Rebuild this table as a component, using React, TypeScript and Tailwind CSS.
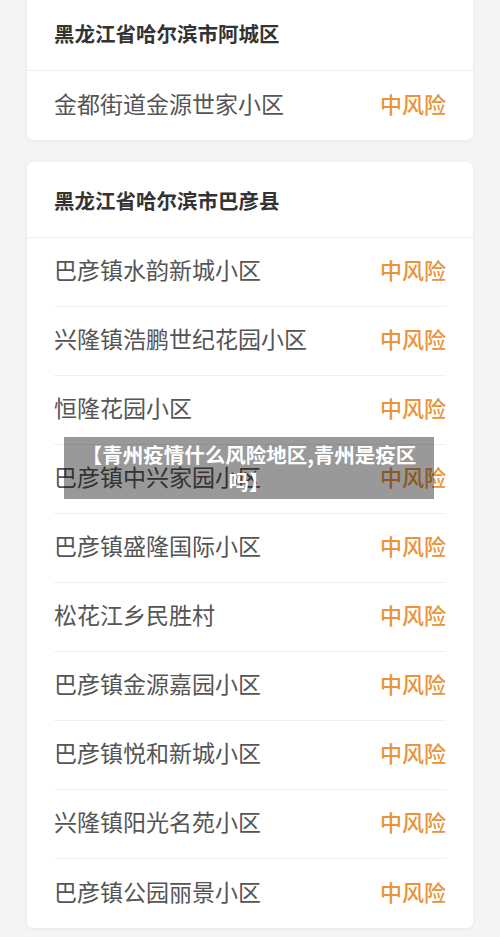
import React from "react";

const font = { fontFamily: '"Noto Sans CJK SC", "Noto Sans", sans-serif' };

type Group = { title: string; places: string[] };

const groups: Group[] = [
  { title: "黑龙江省哈尔滨市阿城区", places: ["金都街道金源世家小区"] },
  {
    title: "黑龙江省哈尔滨市巴彦县",
    places: [
      "巴彦镇水韵新城小区",
      "兴隆镇浩鹏世纪花园小区",
      "恒隆花园小区",
      "巴彦镇中兴家园小区",
      "巴彦镇盛隆国际小区",
      "松花江乡民胜村",
      "巴彦镇金源嘉园小区",
      "巴彦镇悦和新城小区",
      "兴隆镇阳光名苑小区",
      "巴彦镇公园丽景小区",
    ],
  },
];

const RiskCard = ({ group }: { group: Group }) => (
  <div className="bg-white rounded-md shadow-[0_1px_4px_rgba(0,0,0,0.05)]">
    <div className="h-[76px] flex items-center px-[27px] pt-[2px] border-b border-[#f0f0f0]">
      <span className="text-[20.5px] font-bold text-[#333]">{group.title}</span>
    </div>
    <div className="px-[27px]">
      {group.places.map((p, i) => (
        <div
          key={p}
          className={
            "h-[69px] flex items-center justify-between pb-[5px] " +
            (i < group.places.length - 1 ? "border-b border-[#f0f0f0]" : "")
          }
        >
          <span className="text-[23px] text-[#555]">{p}</span>
          <span className="text-[22px] font-medium text-[#e8943a]">中风险</span>
        </div>
      ))}
    </div>
  </div>
);

export default function App() {
  return (
    <div className="relative w-[500px] h-[937px] overflow-hidden bg-[#f4f4f4]" style={font}>
      <div className="-mt-[5px] px-[27px] flex flex-col gap-[22px]">
        {groups.map((g) => (
          <RiskCard key={g.title} group={g} />
        ))}
      </div>

      {/* caption overlay */}
      <div className="absolute left-[64px] top-[437px] w-[370px] h-[62px] bg-black/40 flex items-center justify-center px-[12px]">
        <p className="text-white font-bold text-[20.5px] leading-[27px] text-center">
          【青州疫情什么风险地区,青州是疫区吗】
        </p>
      </div>
    </div>
  );
}
